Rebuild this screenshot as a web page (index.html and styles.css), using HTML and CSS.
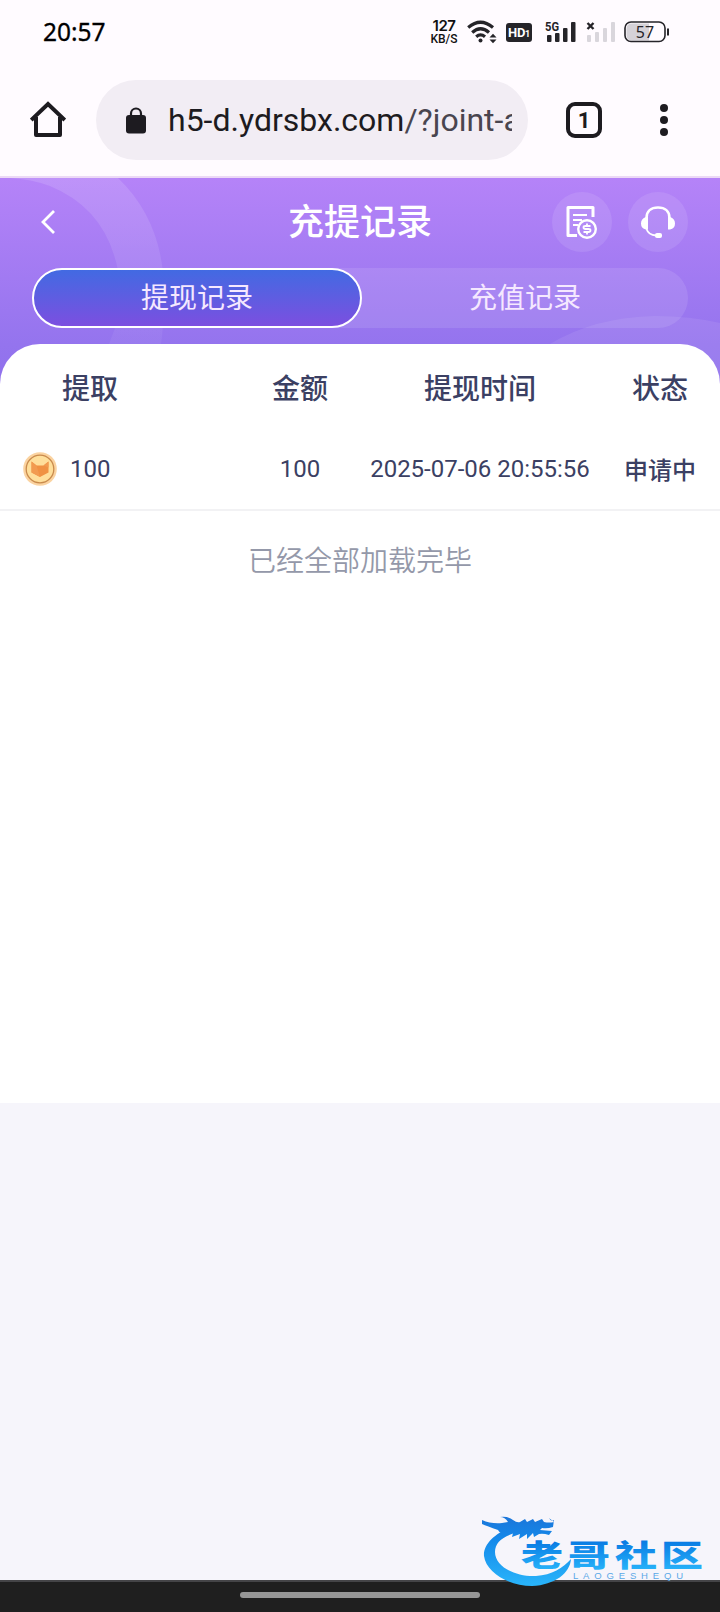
FILE: index.html
```html
<!DOCTYPE html>
<html lang="zh-CN">
<head>
<meta charset="utf-8">
<meta name="viewport" content="width=device-width, initial-scale=1">
<title>充提记录</title>
<link rel="stylesheet" href="styles.css">
</head>
<body>
<div class="screen">
  <div class="statusbar">
    <span class="clock">20:57</span>
    <div class="indicators">
      <div class="speed"><b>127</b><span>KB/S</span></div>
      <svg class="wifi" width="30" height="24" viewBox="0 0 30 24" fill="none" stroke="#252429" stroke-width="3.200">
        <path d="M1.200 7.500Q13.500 -3 26 7.500M5.200 12.500Q13.500 5 22 12.500M9.200 16.800Q13.500 13 18 16.800"/>
        <circle cx="13.500" cy="20.500" r="2" fill="#252429" stroke="none"/>
        <path d="M22.500 17.500l3.500-3.800 3.500 3.800zM22.500 19.500l3.500 3.800 3.500-3.800z" fill="#252429" stroke="none"/>
      </svg>
      <span class="hd">HD<small>1</small></span>
      <svg class="signal" width="32" height="24" viewBox="0 0 32 24" fill="#252429">
        <text x="0" y="10.500" class="net" textLength="14" lengthAdjust="spacingAndGlyphs">5G</text>
        <rect x="2" y="15" width="4.500" height="7" rx="1"/><rect x="10" y="13" width="4.500" height="9" rx="1"/>
        <rect x="18" y="8" width="4.500" height="14" rx="1"/><rect x="26" y="2" width="4.500" height="20" rx="1"/>
      </svg>
      <svg class="nosim" width="29" height="24" viewBox="0 0 29 24" fill="#d9d6dc">
        <path d="M1.500 3l6 6M7.500 3l-6 6" stroke="#252429" stroke-width="2.400"/>
        <rect x="1" y="15" width="4" height="7" rx="1"/><rect x="9" y="12" width="4" height="10" rx="1"/>
        <rect x="17" y="8" width="4" height="14" rx="1"/><rect x="25" y="2" width="4" height="20" rx="1"/>
      </svg>
      <svg class="battery" width="46" height="22" viewBox="0 0 46 22">
        <path d="M8 2.500h17v17H8q-5.500 0-5.500-5.500V8q0-5.500 5.500-5.500z" fill="#d5d2d8"/>
        <rect x="1" y="1" width="40" height="19.500" rx="6" fill="none" stroke="#252429" stroke-width="1.600"/>
        <path d="M44 7.500v7" stroke="#252429" stroke-width="2"/>
        <text x="21" y="16.800" text-anchor="middle" class="pct">57</text>
      </svg>
    </div>
  </div>

  <div class="toolbar">
    <svg class="home" width="36" height="37" viewBox="0 0 36 37" fill="none" stroke="#1d1b20" stroke-width="4" stroke-linejoin="round">
      <path d="M1.200 19L18 3l16.800 16" stroke-linejoin="miter"/><path d="M6 16v18h24V16"/>
    </svg>
    <div class="omnibox">
      <svg width="20" height="27" viewBox="0 0 20 27">
        <path d="M5 10V6.500a5 5 0 0 1 10 0V10" fill="none" stroke="#1d1b20" stroke-width="2.200"/>
        <rect y="8" width="20" height="18.500" rx="3" fill="#1d1b20"/>
      </svg>
      <span class="url">h5-d.ydrsbx.com<i>/?joint-a</i></span>
    </div>
    <span class="tabs-count">1</span>
    <svg class="more" width="8" height="32" viewBox="0 0 8 32" fill="#1d1b20"><circle cx="4" cy="4" r="4"/><circle cx="4" cy="16" r="4"/><circle cx="4" cy="28" r="4"/></svg>
  </div>

  <div class="hero">
    <svg class="hero-rings" width="720" height="214" viewBox="0 0 720 214">
      <defs><linearGradient id="ring" x1="0" y1="0" x2="0" y2="1"><stop offset="0" stop-color="#fff" stop-opacity=".13"/><stop offset="1" stop-color="#fff" stop-opacity=".05"/></linearGradient></defs>
      <path d="M10 0H118Q164 44 164 115Q164 145 161 166H109Q121 138 121 116Q116 35 50 8Q31 1 10 0Z" fill="url(#ring)"/>
      <path d="M550 166Q595 139 655 138Q690 138 720 145V214H550Z" fill="#fff" fill-opacity=".08"/>
    </svg>
    <div class="titlebar">
      <svg class="back" width="16" height="26" viewBox="0 0 16 26" fill="none" stroke="#fff" stroke-width="2.800"><path d="M14 2L3 13l11 11"/></svg>
      <h1>充提记录</h1>
      <div class="actions">
        <span class="round">
          <svg width="32" height="34" viewBox="0 0 32 34" fill="none" stroke="#fff" stroke-width="3">
            <path d="M27 12V2.500H2V30.500h9" stroke-linejoin="round"/><path d="M7 10h14M7 15h9M7 20h5" stroke-width="2.200"/>
            <circle cx="21" cy="24" r="8.800" stroke-width="2.400"/>
            <path d="M24.500 21h-5q-2 0-2 1.500t2 1.500h3q2 0 2 1.500t-2 1.500h-5M21 18.500v2.500M21 27v2.500" stroke-width="1.800"/>
          </svg>
        </span>
        <span class="round">
          <svg width="36" height="34" viewBox="0 0 36 34" fill="none" stroke="#fff" stroke-width="2.600">
            <path d="M6.500 14v-1C6.500 6 11 2.500 18 2.500s11.500 3.500 11.500 10.500v1"/>
            <path d="M8 12v12.500H6q-5-1-5-6T6 12zM28 12v12.500h2q5-1 5-6T30 12z" fill="#fff" stroke="none"/>
            <path d="M6.500 24q2 6 9.500 6.500" stroke-width="1.800"/><rect x="15" y="28" width="7" height="5" rx="2" fill="#fff" stroke="none"/>
          </svg>
        </span>
      </div>
    </div>
    <div class="segment"><span class="seg active">提现记录</span><span class="seg">充值记录</span></div>
  </div>

  <div class="card">
    <div class="row head"><span>提取</span><span>金额</span><span>提现时间</span><span>状态</span></div>
    <div class="row record">
      <span class="coin-cell">
        <svg width="36" height="36" viewBox="0 0 36 36">
          <circle cx="18" cy="18" r="16.800" fill="#fbd3a0"/><circle cx="18" cy="18" r="13.800" fill="#ffdf9b" stroke="#c98b4d" stroke-width="1.300"/>
          <path d="M9.500 10.500l5 4h7l5-4v11L18 26l-8.500-4.500z" fill="#f09243"/><path d="M9.500 10.500l5 4L18 26l-8.500-4.500zM21.500 14.500l5-4v6z" fill="#f29b50"/>
        </svg>
        100
      </span>
      <span>100</span><span>2025-07-06 20:55:56</span><span class="state">申请中</span>
    </div>
    <p class="end">已经全部加载完毕</p>
  </div>

  <div class="navbar"><span></span></div>

  <svg class="watermark" width="230" height="82" viewBox="0 0 230 82">
    <defs>
      <linearGradient id="blue" gradientUnits="userSpaceOnUse" x1="0" y1="4" x2="0" y2="74"><stop offset="0" stop-color="#1c74d8"/><stop offset=".35" stop-color="#1489ea"/><stop offset="1" stop-color="#29b4fa"/></linearGradient>
      <linearGradient id="ink" x1="0" y1="0" x2="0" y2="1"><stop offset=".2" stop-color="#0878e2"/><stop offset=".9" stop-color="#27b3fa"/></linearGradient>
    </defs>
    <path d="M31 16C14 21 1 33 2 45C4 61 26 75 50 75C73 74 88 62 89 48C81 57 70 64 54 65C34 66 13 56 13 41C13 30 23 24 40 20Z" fill="url(#blue)"/>
    <path d="M0 9q9 4 20 3l6-1q-3-5-8-5q8-1 13 3q4 3 7 2l5-3 2 3 6-3 2 3 7-3 2 3q5 1 10 0l-5-4q2 4 5 2l-1 7q-6 2-11 1l-2 2 12 1-3 4q-6-2-10-1l-5 3-1-4-6 6v-5l-8 5 1-5-8 3 1-4-7 1q-6 0-8-4q-11-4-16-6z" fill="url(#blue)"/>
    <g fill="url(#ink)" class="brand">
      <text transform="translate(39 54.500) scale(1.400 1)">老</text><text transform="translate(86 54.500) scale(1.400 1)">哥</text>
      <text transform="translate(133 54.500) scale(1.400 1)">社</text><text transform="translate(179 54.500) scale(1.400 1)">区</text>
    </g>
    <text x="91" y="67.500" textLength="110" lengthAdjust="spacing" class="latin">LAOGESHEQU</text>
  </svg>
</div>
</body>
</html>
```
FILE: styles.css
```css
* { box-sizing: border-box; }
body { margin: 0; font-family: Roboto, "Noto Sans CJK SC", sans-serif; }
.screen { position: relative; width: 720px; height: 1612px; display: flex; flex-direction: column; background: #f6f5fb; overflow: hidden; }

.statusbar { height: 64px; flex: none; padding: 0 50px 0 43px; display: flex; justify-content: space-between; align-items: center; background: #fffbff; }
.clock { font: 400 24.5px/32px "Noto Sans", sans-serif; color: #000; -webkit-text-stroke: .3px #000; }
.indicators { display: flex; align-items: center; }
.speed { width: 28px; display: flex; flex-direction: column; align-items: center; font: 500 12px/12px Roboto, sans-serif; color: #111; }
.speed b { font: 600 15px/14px Inter, sans-serif; letter-spacing: -.5px; }
.wifi { margin-left: 9px; }
.hd { margin-left: 9px; width: 26px; height: 19px; border-radius: 3px; background: #252429; color: #fff; font: 700 13px/19px Roboto, sans-serif; text-align: center; letter-spacing: -.3px; }
.hd small { font-size: 9px; }
.signal { margin-left: 13px; }
.net { font: 700 13px Roboto, sans-serif; }
.nosim { margin-left: 9px; }
.battery { margin-left: 9px; }
.pct { font: 400 16px "Noto Sans", sans-serif; fill: #252429; }

.toolbar { height: 114px; flex: none; padding: 16px 52px 0 30px; display: flex; align-items: flex-start; background: #fffbff; border-bottom: 2px solid #ecd9f6; }
.home { margin-top: 21px; }
.omnibox { margin-left: 30px; width: 432px; height: 80px; border-radius: 40px; padding: 0 16px 0 30px; display: flex; align-items: center; background: #f2edf4; }
.omnibox svg { flex: none; }
.url { margin-left: 22px; width: 344px; overflow: hidden; white-space: nowrap; font-size: 32px; line-height: 44px; color: #1d1b20; }
.url i { font-style: normal; color: #49454f; }
.tabs-count { margin: 22px 0 0 38px; width: 36px; height: 36px; border: 4px solid #1d1b20; border-radius: 9px; text-align: center; font: 700 22px/29px Roboto, sans-serif; color: #1d1b20; }
.more { margin: 24px 0 0 58px; }

.hero { position: relative; height: 214px; flex: none; padding: 14px 32px 0; background: linear-gradient(#b583f8, #9474ee 78%, #8f70ec); }
.hero-rings { position: absolute; left: 0; top: 0; }
.titlebar { position: relative; height: 60px; display: grid; grid-template-columns: 136px 1fr 136px; align-items: center; }
.back { margin-left: 8px; }
.titlebar h1 { margin: 0; padding-top: 2px; text-align: center; font-size: 36px; line-height: 52px; font-weight: 500; color: #fff; }
.actions { display: flex; gap: 16px; }
.round { width: 60px; height: 60px; border-radius: 50%; display: flex; align-items: center; justify-content: center; background: rgba(255,255,255,.1); }
.segment { position: relative; margin-top: 16px; height: 60px; border-radius: 30px; display: flex; background: rgba(255,255,255,.1); }
.seg { flex: 1; text-align: center; font-size: 28px; line-height: 62px; color: #f5e8ff; }
.seg.active { flex: 0 0 330px; border: 2px solid #fff; border-radius: 30px; line-height: 58px; background: linear-gradient(#426ae2, #7c4fe0); }

.card { position: relative; margin-top: -48px; height: 759px; flex: none; border-radius: 40px 40px 0 0; background: #fff; color: #3b4063; }
.row { display: grid; grid-template-columns: 240px 120px 240px 120px; align-items: center; text-align: center; }
.head { height: 85px; font-size: 28px; font-weight: 500; }
.head span:first-child { padding-left: 62px; text-align: left; }
.record { height: 82px; padding-bottom: 1px; border-bottom: 2px solid #f2f2f4; font-size: 24px; }
.coin-cell { padding-left: 22px; display: flex; align-items: center; gap: 12px; }
.record .state { font-weight: 500; }
.end { margin: 31px 0 0; text-align: center; font-size: 28px; line-height: 40px; font-weight: 350; color: #9498a9; }

.navbar { margin-top: auto; height: 32px; flex: none; display: flex; justify-content: center; padding-top: 10px; background: #1f1f1f; border-top: 2px solid #444447; }
.navbar span { width: 240px; height: 6px; border-radius: 3px; background: #969696; }
.watermark { position: absolute; left: 482px; top: 1511px; }
.brand { font: 900 30px "Noto Sans CJK SC", sans-serif; }
.latin { font: 500 9.5px "Liberation Sans", sans-serif; fill: #5ba9e8; }
```
